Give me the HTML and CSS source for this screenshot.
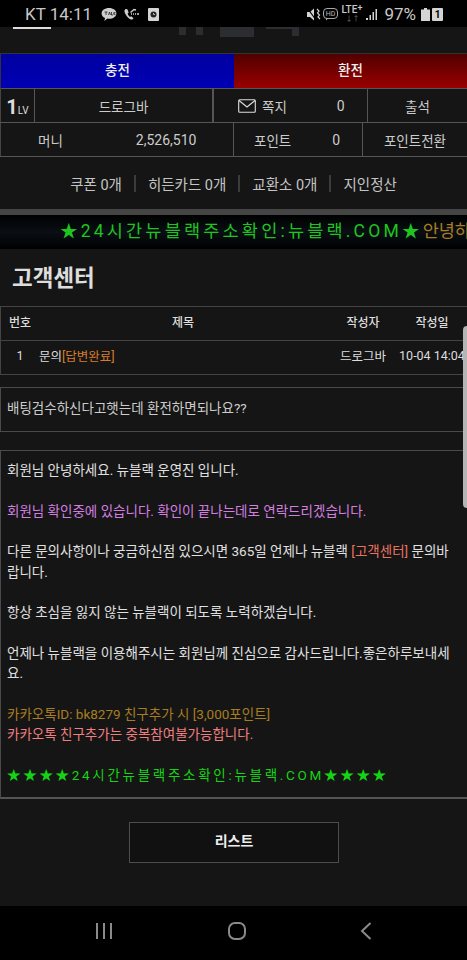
FILE: index.html
```html
<!DOCTYPE html>
<html lang="ko">

<head>
    <meta charset="UTF-8">
    <title>고객센터</title>
    <link rel="stylesheet" href="styles.css">
</head>

<body>
    <div id="wrapper">
        <div id="status">
            <div class="status-left">
                <span>KT 14:11</span>
                <svg width="16" height="15" viewBox="0 0 16 15"><path d="M8 1C3.8 1 .6 3.3.6 6.4c0 2 1.4 3.7 3.4 4.6l-.6 3 3-2.400C6.900 11.700 7.500 11.800 8 11.800c4.200 0 7.400-2.400 7.400-5.400S12.200 1 8 1z" fill="#cfcfcf"/><path d="M3.500 5h3M5 5v3M7.500 8l1-3 1 3M10.500 5v3h1.500M13 5v3M13 6.500l1.500-1.500M13 6.500L14.500 8" stroke="#222" stroke-width=".8" fill="none"/></svg>
                <svg width="17" height="15" viewBox="0 0 17 15"><path d="M2 2.500c-1 1-.6 3 1 5.500s3.500 4 5 4.500c1 .3 2-.2 2.500-1.200l-2.300-2-1.200.8C6 9.200 5 7.700 4.600 6.500l1.100-.9L4.300 2.200C3.500 1.900 2.600 2 2 2.500z" fill="#cfcfcf"/><path d="M7.500 5.500L11 2.500l2 .5M8 7h1M10 7h1M12 7h1M14 7h2" stroke="#cfcfcf" stroke-width="1.400" fill="none"/></svg>
                <svg class="note-icon" width="11" height="13" viewBox="0 0 11 13"><rect width="11" height="13" rx="1" fill="#d4d4d4"/><circle cx="5.500" cy="6.500" r="3" fill="#222"/><path d="M5.500 5v1.500h1.500" stroke="#d4d4d4" stroke-width=".8" fill="none"/></svg>
            </div>
            <div class="status-right">
                <svg class="ic-mute" width="14" height="13" viewBox="0 0 14 13"><path d="M0 4h3l4-3.500v12L3 9H0z" fill="#d4d4d4"/><path d="M1 1l8 11" stroke="#000" stroke-width="1.200"/><path d="M10 1l2 2-1.500 2 2 2-1.500 2 2 2" stroke="#d4d4d4" stroke-width="1.200" fill="none"/></svg>
                <svg class="ic-hd" width="15" height="13" viewBox="0 0 15 13"><rect x=".5" y=".5" width="14" height="10" rx="3.500" fill="none" stroke="#bbb" stroke-width=".9"/><text x="7.500" y="8" class="hd-text">HD</text><path d="M3 10.500v2l2-2" fill="#bbb"/></svg>
                <div class="lte">LTE<span class="lte-plus">+</span><div class="lte-arrows">↓↑</div></div>
                <svg class="ic-signal" width="12" height="13" viewBox="0 0 12 13"><rect x="0" y="10" width="2" height="2" fill="#d4d4d4"/><rect x="3.500" y="7" width="1.500" height="5" fill="#d4d4d4"/><rect x="6.500" y="4" width="1.500" height="8" fill="#d4d4d4"/><rect x="9.500" y="1" width="1.500" height="11" fill="#d4d4d4"/></svg>
                <span class="pct">97%</span>
                <svg width="9" height="13" viewBox="0 0 9 13"><path d="M3 0h3v1.500h3V13H0V1.500h3z" fill="#d4d4d4"/></svg>
                <div class="sim">1</div>
            </div>
        </div>

        <div id="logo">
            <div class="logo-line"></div>
            <div class="logo-bits">
                <i class="bit-a"></i><i class="bit-a"></i><i class="bit-b"></i><i class="bit-c"></i>
            </div>
        </div>

        <div id="money-btn">
            <a class="btn-charge">충전</a>
            <a class="btn-exchange">환전</a>
        </div>

        <div class="info-row row-one">
            <div class="cell cell-lv"><b>1</b><small>LV</small></div>
            <div class="cell cell-name">드로그바</div>
            <div class="cell cell-msg">
                <svg width="18" height="14" viewBox="0 0 18 14"><rect x=".7" y=".7" width="16.600" height="12.600" rx="1" fill="none" stroke="#ddd" stroke-width="1.100"/><path d="M1 1.500l8 6.500 8-6.500" fill="none" stroke="#ddd" stroke-width="1.100"/></svg>
                <span>쪽지</span><span class="msg-count">0</span>
            </div>
            <div class="cell cell-attend">출석</div>
        </div>
        <div class="info-row row-two">
            <div class="cell cell-money"><span class="money-label">머니</span><span class="money-val">2,526,510</span></div>
            <div class="cell cell-point"><span>포인트</span><span class="point-val">0</span></div>
            <div class="cell cell-swap">포인트전환</div>
        </div>

        <div id="links">
            <span>쿠폰 0개</span><i></i><span>히든카드 0개</span><i></i><span>교환소 0개</span><i></i><span>지인정산</span>
        </div>

        <div id="marquee">★24시간뉴블랙주소확인:뉴블랙.COM★<span>안녕하세요</span></div>

        <div id="title">고객센터</div>

        <div id="board">
            <div class="board-row board-head">
                <div class="col-no">번호</div>
                <div class="col-title">제목</div>
                <div class="col-writer">작성자</div>
                <div class="col-date">작성일</div>
            </div>
            <div class="board-row board-item">
                <div class="col-no">1</div>
                <div class="col-title">문의<span class="done">[답변완료]</span></div>
                <div class="col-writer">드로그바</div>
                <div class="col-date">10-04 14:04</div>
            </div>
        </div>

        <div id="question">배팅검수하신다고햇는데 환전하면되나요??</div>

        <div id="answer">
            <p>회원님 안녕하세요. 뉴블랙 운영진 입니다.</p>
            <p class="violet">회원님 확인중에 있습니다. 확인이 끝나는데로 연락드리겠습니다.</p>
            <p>다른 문의사항이나 궁금하신점 있으시면 365일 언제나 뉴블랙 <span class="salmon">[고객센터]</span> 문의바<br>랍니다.</p>
            <p>항상 초심을 잃지 않는 뉴블랙이 되도록 노력하겠습니다.</p>
            <p>언제나 뉴블랙을 이용해주시는 회원님께 진심으로 감사드립니다.좋은하루보내세<br>요.</p>
            <p><span class="gold">카카오톡ID: bk8279 친구추가 시 [3,000포인트]</span><br><span class="pink">카카오톡 친구추가는 중복참여불가능합니다.</span></p>
            <p class="green">★★★★24시간뉴블랙주소확인:뉴블랙.COM★★★★</p>
        </div>

        <div id="list-wrap"><a class="list-btn">리스트</a></div>

        <div id="navbar">
            <svg width="18" height="18" viewBox="0 0 18 18"><path d="M2 1v16M9 1v16M16 1v16" stroke="#8a8a8a" stroke-width="2"/></svg>
            <svg width="18" height="18" viewBox="0 0 18 18"><rect x="1" y="1" width="16" height="16" rx="6" fill="none" stroke="#8a8a8a" stroke-width="2"/></svg>
            <svg width="12" height="20" viewBox="0 0 12 20"><path d="M10.500 2L2 10l8.500 8" fill="none" stroke="#8a8a8a" stroke-width="2"/></svg>
        </div>

        <div id="scrollbar"></div>
    </div>
</body>

</html>
```

FILE: styles.css
```css
* {
    box-sizing: border-box;
}

body {
    margin: 0;
    background-color: #151515;
    color: #ddd;
    font-family: Roboto, "Noto Sans CJK KR", sans-serif;
}

#wrapper {
    position: relative;
    width: 467px;
    height: 960px;
    overflow: hidden;
}

#status {
    height: 27px;
    background-color: #000;
    color: #c8c8c8;
    display: flex;
    justify-content: space-between;
    align-items: center;
    padding: 1px 24px 0 25px;
}

.status-left {
    display: flex;
    align-items: center;
    font-size: 17px;
}

.status-left svg {
    margin-left: 6px;
}

.status-left span {
    margin-right: 3px;
}

.status-left .note-icon {
    margin-left: 8px;
}

.status-right {
    display: flex;
    align-items: center;
}

.ic-hd {
    margin-left: 2px;
}

.hd-text {
    font-size: 7px;
    fill: #bbb;
    text-anchor: middle;
}

.lte {
    position: relative;
    width: 22px;
    height: 20px;
    margin-left: 3px;
    font-size: 10px;
    line-height: 11px;
    font-weight: 500;
    white-space: nowrap;
}

.lte-plus {
    position: relative;
    top: -2px;
    font-size: 9px;
}

.lte-arrows {
    position: absolute;
    left: 4px;
    top: 11px;
    font-size: 7px;
    line-height: 8px;
    color: #666;
}

.ic-signal {
    margin-left: 3px;
}

.pct {
    font-size: 17px;
    margin: 0 5px 0 6px;
}

.sim {
    width: 11px;
    height: 13px;
    background-color: #d4d4d4;
    color: #000;
    font-size: 10px;
    font-weight: 700;
    line-height: 13px;
    text-align: center;
    border-radius: 1px;
    margin-left: 2px;
}

#logo {
    position: relative;
    height: 26px;
}

.logo-line {
    width: 38px;
    height: 2px;
    margin-left: 13px;
    background-color: #ddd;
}

.logo-bits {
    position: absolute;
    left: 179px;
    top: 0;
    display: flex;
    align-items: flex-start;
}

.logo-bits i {
    display: block;
    background-color: #2b2d30;
}

.bit-a {
    width: 7px;
    height: 8px;
}

.bit-a + .bit-a {
    margin-left: 10px;
}

.logo-bits .bit-b {
    width: 34px;
    height: 10px;
    margin: 0 12px 0 17px;
}

.logo-bits .bit-c {
    width: 33px;
    height: 9px;
    background: linear-gradient(to bottom, #2b2d30 2px, transparent 2px), linear-gradient(to right, transparent 26px, #2b2d30 26px);
}

#money-btn {
    display: flex;
    height: 36px;
    border-top: 1px solid #333;
    border-left: 1px solid #333;
    border-bottom: 1px solid #555;
    font-size: 13.500px;
    font-weight: 500;
    color: #eee;
    text-align: center;
    line-height: 32px;
}

#money-btn a {
    display: block;
}

.btn-charge {
    width: 233px;
    background: linear-gradient(to bottom, #0000a0, #0000b4);
}

.btn-exchange {
    flex: 1;
    background: linear-gradient(to bottom, #500000, #9a0000);
}

.info-row {
    display: flex;
    height: 34px;
    border-bottom: 1px solid #555;
    font-size: 13.500px;
    color: #ccc;
}

.cell {
    display: flex;
    align-items: center;
    justify-content: center;
    border-right: 1px solid #555;
}

.cell:first-child {
    border-left: 1px solid #444;
}

.cell:last-child {
    border-right: 0;
    flex: 1;
}

.cell-lv {
    width: 35px;
    color: #ddd;
    align-items: baseline;
    padding-top: 5px;
}

.cell-lv b {
    font-size: 20px;
    line-height: 26px;
}

.cell-lv small {
    font-size: 10px;
}

.cell-name {
    width: 178px;
}

.cell-msg {
    width: 155px;
    justify-content: flex-start;
    padding-left: 24px;
    border-left: 1px solid #555;
}

.cell-msg span:first-of-type {
    margin-left: 6px;
}

.msg-count {
    margin-left: 50px;
    font-size: 14px;
}

.cell-money {
    width: 234px;
    justify-content: flex-start;
}

.money-label {
    margin-left: 37px;
}

.money-val {
    margin-left: 73px;
    font-size: 14px;
}

.cell-point {
    width: 129px;
    justify-content: flex-start;
}

.cell-point span:first-child {
    margin-left: 20px;
}

.point-val {
    margin-left: 41px;
    font-size: 14px;
}

#links {
    height: 53px;
    display: flex;
    align-items: center;
    justify-content: center;
    font-size: 14.500px;
    color: #c4c4c4;
    border-bottom: 1px solid #444;
}

#links i {
    width: 2px;
    height: 17px;
    margin: 0 12px;
    background-color: #3c3c3c;
}

#marquee {
    border-top: 5px solid #454545;
    height: 39px;
    padding-left: 60px;
    background: linear-gradient(to bottom, #000, #0a0f14 50%, #000);
    color: #1fc41f;
    font-size: 17.500px;
    line-height: 33px;
    letter-spacing: 3.200px;
    white-space: nowrap;
    overflow: hidden;
}

#marquee span {
    color: #a87d22;
    letter-spacing: 0;
}

#title {
    height: 57px;
    padding: 11px 12px 0;
    font-size: 22.500px;
    line-height: 36px;
    font-weight: 700;
    color: #ddd;
}

#board {
    border-top: 1px solid #444;
    border-left: 1px solid #444;
    font-size: 12.500px;
    color: #ddd;
}

.board-row {
    display: flex;
    align-items: center;
    height: 34px;
    padding-bottom: 4px;
    border-bottom: 1px solid #444;
    white-space: nowrap;
}

.board-head {
    font-weight: 500;
    font-size: 12px;
}

.col-no {
    width: 39px;
    text-align: center;
    margin-left: -1px;
    padding-left: 1px;
}

.col-title {
    width: 290px;
}

.board-head .col-title {
    text-align: center;
    padding-right: 2px;
}

.col-writer {
    width: 68px;
    text-align: center;
}

.col-date {
    width: 70px;
    text-align: center;
}

.done {
    color: #d87c2c;
}

#question {
    height: 45px;
    margin-top: 12px;
    padding-left: 6px;
    border: 1px solid #4a4a4a;
    border-right: 0;
    font-size: 13.500px;
    line-height: 41px;
    color: #ccc;
}

#answer {
    margin-top: 18px;
    height: 349px;
    padding: 9px 6px 0;
    border: 1px solid #4a4a4a;
    border-right: 0;
    border-bottom: 2px solid #555;
    font-size: 13.500px;
    line-height: 20.500px;
    color: #e0e0e0;
}

#answer p {
    margin: 0 0 20px;
}

.violet {
    color: #d47fe0;
}

.salmon {
    color: #e8735f;
}

.gold {
    color: #a87d22;
}

.pink {
    color: #f07f7f;
}

#answer .green {
    color: #14d414;
    letter-spacing: 2.700px;
    white-space: nowrap;
}

#list-wrap {
    height: 108px;
    padding-top: 23px;
}

.list-btn {
    display: block;
    width: 210px;
    height: 41px;
    margin-left: 129px;
    background-color: #111;
    border: 1px solid #4d4d4d;
    color: #eee;
    font-size: 14px;
    font-weight: 700;
    text-align: center;
    line-height: 36px;
}

#navbar {
    position: absolute;
    left: 0;
    right: 0;
    bottom: 0;
    height: 54px;
    background-color: #000;
    display: flex;
    align-items: center;
    padding: 0 95px 4px 95px;
    justify-content: space-between;
}

#scrollbar {
    position: absolute;
    right: 0;
    top: 326px;
    width: 4px;
    height: 182px;
    background-color: #b5b5b5;
    border-radius: 4px 0 0 4px;
}
```
